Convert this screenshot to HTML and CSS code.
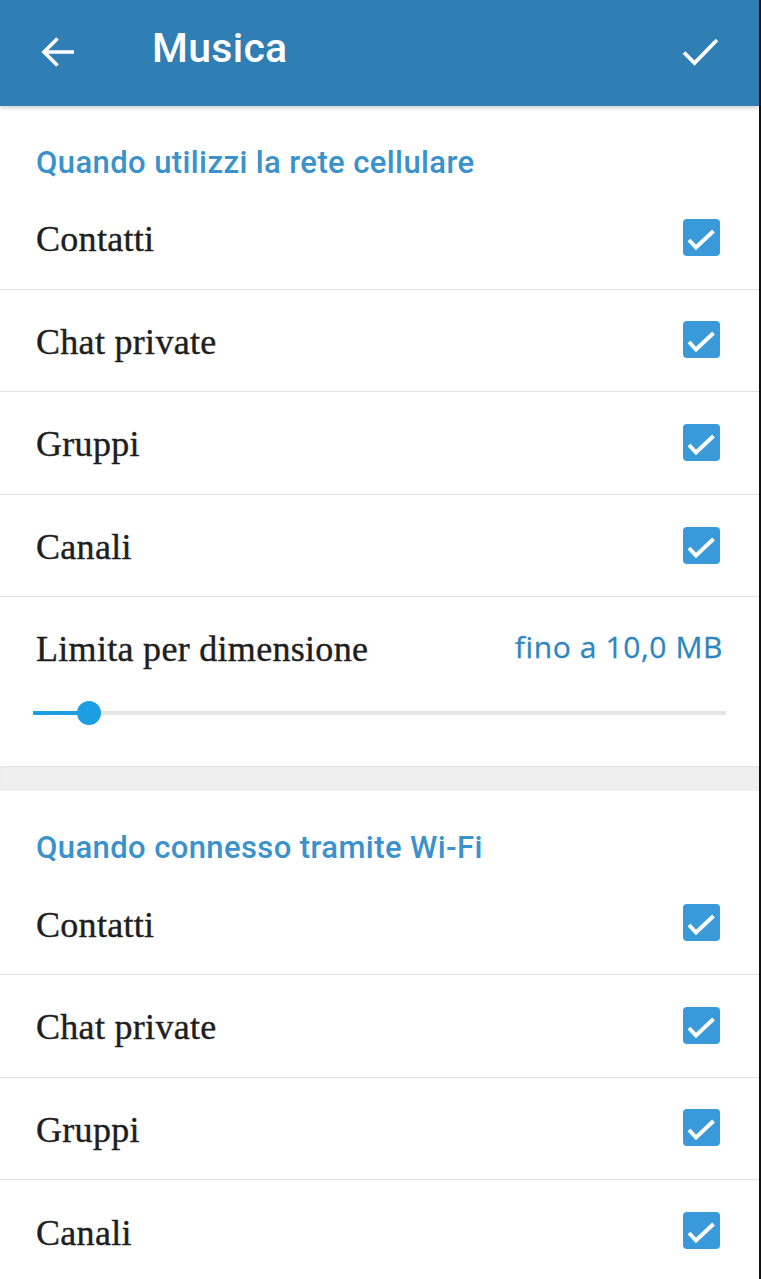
FILE: index.html
```html
<!DOCTYPE html>
<html lang="it">
<head>
  <meta charset="UTF-8" />
  <title>Musica</title>
  <link rel="stylesheet" href="styles.css">
</head>
<body>
  <div class="screen">
    <header class="topbar">
      <span class="icon back">
        <svg width="36" height="32" viewBox="0 0 36 32"><path d="M34 16H4M17.5 2.5L4 16l13.5 13.5" fill="none" stroke="#fff" stroke-width="3.6"/></svg>
      </span>
      <h1 class="title">Musica</h1>
      <span class="icon done">
        <svg width="37" height="30" viewBox="0 0 37 30"><path d="M2 15.5l10.5 10.5L35 3" fill="none" stroke="#fff" stroke-width="3.8"/></svg>
      </span>
    </header>

    <section class="group">
      <h2 class="group-title">Quando utilizzi la rete cellulare</h2>
      <div class="row"><span class="label">Contatti</span><span class="checkbox"><svg viewBox="0 0 37 37"><path d="M6 21l7 7.5L30.5 12" fill="none" stroke="#fff" stroke-width="4"/></svg></span></div>
      <div class="row"><span class="label">Chat private</span><span class="checkbox"><svg viewBox="0 0 37 37"><path d="M6 21l7 7.5L30.5 12" fill="none" stroke="#fff" stroke-width="4"/></svg></span></div>
      <div class="row"><span class="label">Gruppi</span><span class="checkbox"><svg viewBox="0 0 37 37"><path d="M6 21l7 7.5L30.5 12" fill="none" stroke="#fff" stroke-width="4"/></svg></span></div>
      <div class="row"><span class="label">Canali</span><span class="checkbox"><svg viewBox="0 0 37 37"><path d="M6 21l7 7.5L30.5 12" fill="none" stroke="#fff" stroke-width="4"/></svg></span></div>
      <div class="limit">
        <div class="limit-head">
          <span class="label">Limita per dimensione</span>
          <span class="limit-value">fino a 10,0 MB</span>
        </div>
        <div class="slider">
          <div class="slider-fill" style="width:56px"></div>
          <div class="slider-thumb" style="left:56px"></div>
        </div>
      </div>
    </section>

    <div class="divider-band"></div>

    <section class="group">
      <h2 class="group-title">Quando connesso tramite Wi-Fi</h2>
      <div class="row"><span class="label">Contatti</span><span class="checkbox"><svg viewBox="0 0 37 37"><path d="M6 21l7 7.5L30.5 12" fill="none" stroke="#fff" stroke-width="4"/></svg></span></div>
      <div class="row"><span class="label">Chat private</span><span class="checkbox"><svg viewBox="0 0 37 37"><path d="M6 21l7 7.5L30.5 12" fill="none" stroke="#fff" stroke-width="4"/></svg></span></div>
      <div class="row"><span class="label">Gruppi</span><span class="checkbox"><svg viewBox="0 0 37 37"><path d="M6 21l7 7.5L30.5 12" fill="none" stroke="#fff" stroke-width="4"/></svg></span></div>
      <div class="row"><span class="label">Canali</span><span class="checkbox"><svg viewBox="0 0 37 37"><path d="M6 21l7 7.5L30.5 12" fill="none" stroke="#fff" stroke-width="4"/></svg></span></div>
    </section>
  </div>
</body>
</html>
```

FILE: styles.css
```css
body {
  margin: 0;
  background: #fff;
  font-family: Roboto, "Noto Sans", sans-serif;
}
.screen {
  height: 1279px;
  overflow: hidden;
  border-right: 2px solid #111;
  background: #fff;
}
.topbar {
  height: 106px;
  background: #2f7fb5;
  display: flex;
  align-items: center;
  padding: 0 42px 0 40px;
  box-shadow: 0 2px 4px rgba(0,0,0,0.18);
  position: relative;
}
.icon {
  display: flex;
}
.back {
  margin-top: -2px;
}
.done {
  margin-left: auto;
  margin-top: -3px;
  margin-right: -2px;
}
.title {
  margin: -10px 0 0 76px;
  color: #fff;
  font-size: 41px;
  font-weight: 500;
  letter-spacing: 0.3px;
}
.group-title {
  margin: 0;
  padding: 33px 36px 0;
  height: 48px;
  line-height: 48px;
  font-size: 31px;
  font-weight: 500;
  letter-spacing: 0.4px;
  color: #3a92cc;
}
.row {
  box-sizing: border-box;
  height: 102.6px;
  display: flex;
  align-items: center;
  justify-content: space-between;
  padding: 0 39px 0 36px;
  border-bottom: 1px solid #e2e2e2;
}
.group .row:last-child {
  border-bottom: none;
}
.label {
  font-family: "Liberation Serif", serif;
  font-size: 36px;
  color: #1e1e1e;
  line-height: 48px;
  letter-spacing: 0.3px;
  -webkit-text-stroke: 0.4px #1e1e1e;
  padding-top: 3px;
}
.checkbox {
  width: 37px;
  height: 37px;
  border-radius: 4px;
  background: #3a9ad9;
  display: flex;
  margin-top: -1px;
}
.checkbox svg {
  width: 37px;
  height: 37px;
}
.limit {
  box-sizing: border-box;
  height: 169px;
  padding: 25px 35px 0 36px;
}
.limit-head {
  display: flex;
  justify-content: space-between;
  align-items: baseline;
}
.limit-value {
  font-family: "Open Sans", sans-serif;
  font-size: 30px;
  letter-spacing: 0.6px;
  color: #2e86c0;
  position: relative;
  top: -3px;
  margin-right: 1px;
  -webkit-text-stroke: 0.3px #2e86c0;
}
.slider {
  position: relative;
  height: 4px;
  margin: 38px -2px 0 -3px;
  background: #e6e6e6;
}
.slider-fill {
  height: 4px;
  background: #1d9ee3;
}
.slider-thumb {
  position: absolute;
  top: -10px;
  width: 24px;
  height: 24px;
  margin-left: -12px;
  border-radius: 50%;
  background: #1d9ee3;
}
.divider-band {
  height: 25px;
  background: #efefef;
  box-shadow: inset 0 1px 2px rgba(0,0,0,0.06);
}
```
